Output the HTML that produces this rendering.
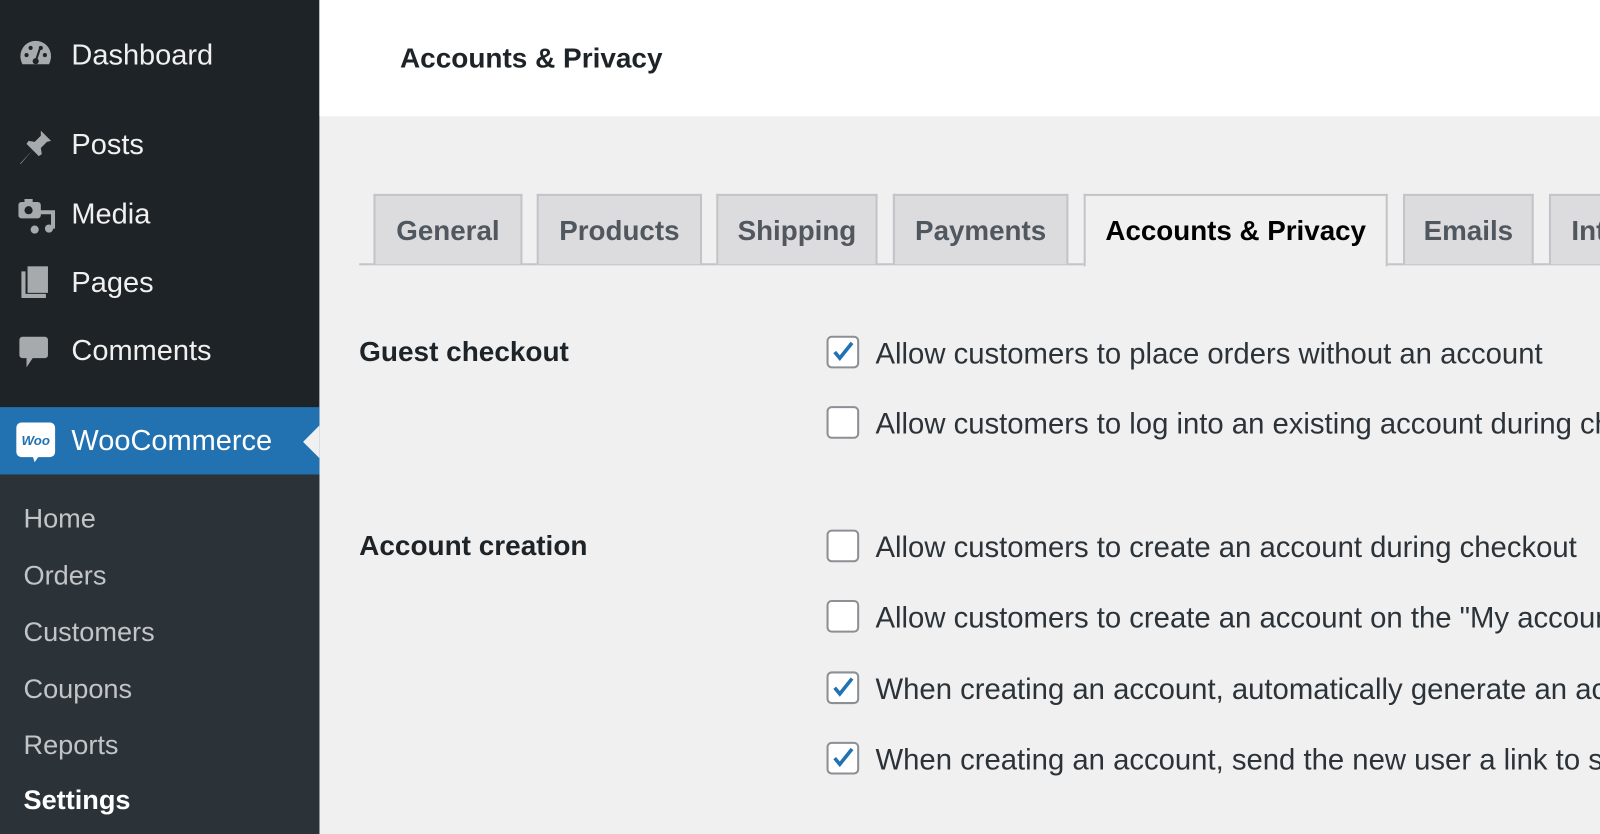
<!DOCTYPE html>
<html><head><meta charset="utf-8"><style>
*{margin:0;padding:0;box-sizing:border-box}
html,body{width:1600px;height:834px;overflow:hidden}
body{position:relative;background:#f0f0f1;font-family:"Liberation Sans",sans-serif;}
.w{position:absolute;left:0;top:0;width:1568px;height:818px;transform:scale(1.0204);transform-origin:0 0}
.sb{position:absolute;left:0;top:0;width:313px;height:834px;background:#1d2327}
.sub{position:absolute;left:0;top:465px;width:313px;height:369px;background:#2c3338}
.woo{position:absolute;left:0;top:399px;width:313px;height:66px;background:#2271b1}
.arrow{position:absolute;left:297px;top:417px;width:0;height:0;border-top:16px solid transparent;border-bottom:16px solid transparent;border-right:16px solid #f0f0f1}
.mi{position:absolute;left:70px;color:#f0f0f1;font-size:28.4px;white-space:nowrap;line-height:1}
.si{position:absolute;left:23px;color:#c3c4c7;font-size:26.6px;line-height:1;white-space:nowrap}
.ic{position:absolute;left:18px}
.hdr{position:absolute;left:313px;top:0;width:1287px;height:114px;background:#fff}
.hdr span{position:absolute;left:79px;top:41px;font-size:27.4px;font-weight:bold;color:#1d2327}
.line{position:absolute;left:352px;top:258px;width:1248px;height:2px;background:#c3c4c7}
.tab{position:absolute;top:190px;height:69px;background:#dcdcde;border:2px solid #c3c4c7;border-bottom:none;color:#50575e;font-size:27.2px;font-weight:bold;text-align:center;line-height:68px;white-space:nowrap;overflow:hidden}
.tab.act{background:#f0f0f1;color:#000;height:71px}
.lbl{position:absolute;left:352px;font-size:27.4px;font-weight:bold;color:#1d2327}
.cb{position:absolute;left:810px;width:32px;height:32px;border:2px solid #8c8f94;border-radius:5px;background:#fff}
.cb svg{position:absolute;left:2px;top:2px}
.t{position:absolute;left:858px;font-size:28.7px;color:#2c3338;white-space:nowrap;line-height:1}
</style></head><body><div class="w">
<div class="sb"></div>
<div class="sub"></div>
<div class="woo"></div>
<div class="arrow"></div>
<svg class="ic" style="top:38px" width="34" height="30" viewBox="0 0 34 30"><path d="M17 2A15 15 0 0 0 2 17c0 3 1 6 2 8h26c1-2 2-5 2-8A15 15 0 0 0 17 2z" fill="#a7aaad"/><circle cx="17" cy="22" r="3" fill="#1d2327"/><path d="M17 22l4-12" stroke="#1d2327" stroke-width="2"/><circle cx="8" cy="16" r="2" fill="#1d2327"/><circle cx="26" cy="16" r="2" fill="#1d2327"/><circle cx="12" cy="9" r="2" fill="#1d2327"/><circle cx="22" cy="9" r="2" fill="#1d2327"/></svg>
<div class="mi" style="top:40px">Dashboard</div>
<svg class="ic" style="top:126px" width="34" height="36" viewBox="0 0 34 36"><path d="M22 2l10 10-4 1-6 6 1 6-3 2-6-6-12 14 0-1 12-13-6-6 2-3 6 1 6-6z" fill="#a7aaad"/></svg>
<div class="mi" style="top:128px">Posts</div>
<svg class="ic" style="top:194px" width="36" height="36" viewBox="0 0 36 36"><rect x="0" y="4" width="22" height="16" rx="3" fill="#a7aaad"/><rect x="6" y="1" width="8" height="5" fill="#a7aaad"/><circle cx="10" cy="12" r="4" fill="#1d2327"/><path d="M20 14h14v16" stroke="#a7aaad" stroke-width="4" fill="none"/><circle cx="16" cy="31" r="4" fill="#a7aaad"/><circle cx="30" cy="30" r="4" fill="#a7aaad"/></svg>
<div class="mi" style="top:196px">Media</div>
<svg class="ic" style="top:260px" width="32" height="34" viewBox="0 0 32 34"><path d="M3 6v26h24v-4H7V6z" fill="#a7aaad"/><rect x="9" y="1" width="20" height="26" fill="#a7aaad"/></svg>
<div class="mi" style="top:263px">Pages</div>
<svg class="ic" style="top:328px" width="32" height="34" viewBox="0 0 32 34"><path d="M4 2h22a3 3 0 0 1 3 3v15a3 3 0 0 1-3 3H14l-6 9v-9H4a3 3 0 0 1-3-3V5a3 3 0 0 1 3-3z" fill="#a7aaad"/></svg>
<div class="mi" style="top:330px">Comments</div>
<svg class="ic" style="top:413px;left:15px" width="40" height="40" viewBox="0 0 40 40"><rect x="1" y="1" width="38" height="34" rx="5" fill="#fff"/><path d="M17 34l2 6 4-6z" fill="#fff"/><text x="20" y="23" font-family="Liberation Sans" font-size="13" font-style="italic" font-weight="bold" fill="#2271b1" text-anchor="middle">Woo</text></svg>
<div class="mi" style="top:418px;color:#fff">WooCommerce</div>
<div class="si" style="top:495px">Home</div>
<div class="si" style="top:551px">Orders</div>
<div class="si" style="top:606px">Customers</div>
<div class="si" style="top:662px">Coupons</div>
<div class="si" style="top:717px">Reports</div>
<div class="si" style="top:771px;color:#fff;font-weight:bold">Settings</div>

<div class="hdr"><span>Accounts &amp; Privacy</span></div>
<div class="line"></div>
<div class="tab" style="left:366px;width:146px">General</div>
<div class="tab" style="left:526px;width:162px">Products</div>
<div class="tab" style="left:702px;width:158px">Shipping</div>
<div class="tab" style="left:875px;width:172px">Payments</div>
<div class="tab act" style="left:1062px;width:298px">Accounts &amp; Privacy</div>
<div class="tab" style="left:1375px;width:128px">Emails</div>
<div class="tab" style="left:1518px;width:120px;text-align:left;padding-left:20px">Integration</div>

<div class="lbl" style="top:329px">Guest checkout</div>
<div class="lbl" style="top:519px">Account creation</div>

<div class="cb" style="top:329px"><svg width="24" height="24" viewBox="0 0 24 24"><path d="M4 12l5 6L21 3" stroke="#2271b1" stroke-width="3.5" fill="none"/></svg></div>
<div class="t" style="top:333px">Allow customers to place orders without an account</div>
<div class="cb" style="top:398px"></div>
<div class="t" style="top:402px">Allow customers to log into an existing account during checkout</div>
<div class="cb" style="top:519px"></div>
<div class="t" style="top:523px">Allow customers to create an account during checkout</div>
<div class="cb" style="top:588px"></div>
<div class="t" style="top:592px">Allow customers to create an account on the "My account" page</div>
<div class="cb" style="top:658px"><svg width="24" height="24" viewBox="0 0 24 24"><path d="M4 12l5 6L21 3" stroke="#2271b1" stroke-width="3.5" fill="none"/></svg></div>
<div class="t" style="top:662px">When creating an account, automatically generate an account username</div>
<div class="cb" style="top:727px"><svg width="24" height="24" viewBox="0 0 24 24"><path d="M4 12l5 6L21 3" stroke="#2271b1" stroke-width="3.5" fill="none"/></svg></div>
<div class="t" style="top:731px">When creating an account, send the new user a link to set their password</div>
</div></body></html>
